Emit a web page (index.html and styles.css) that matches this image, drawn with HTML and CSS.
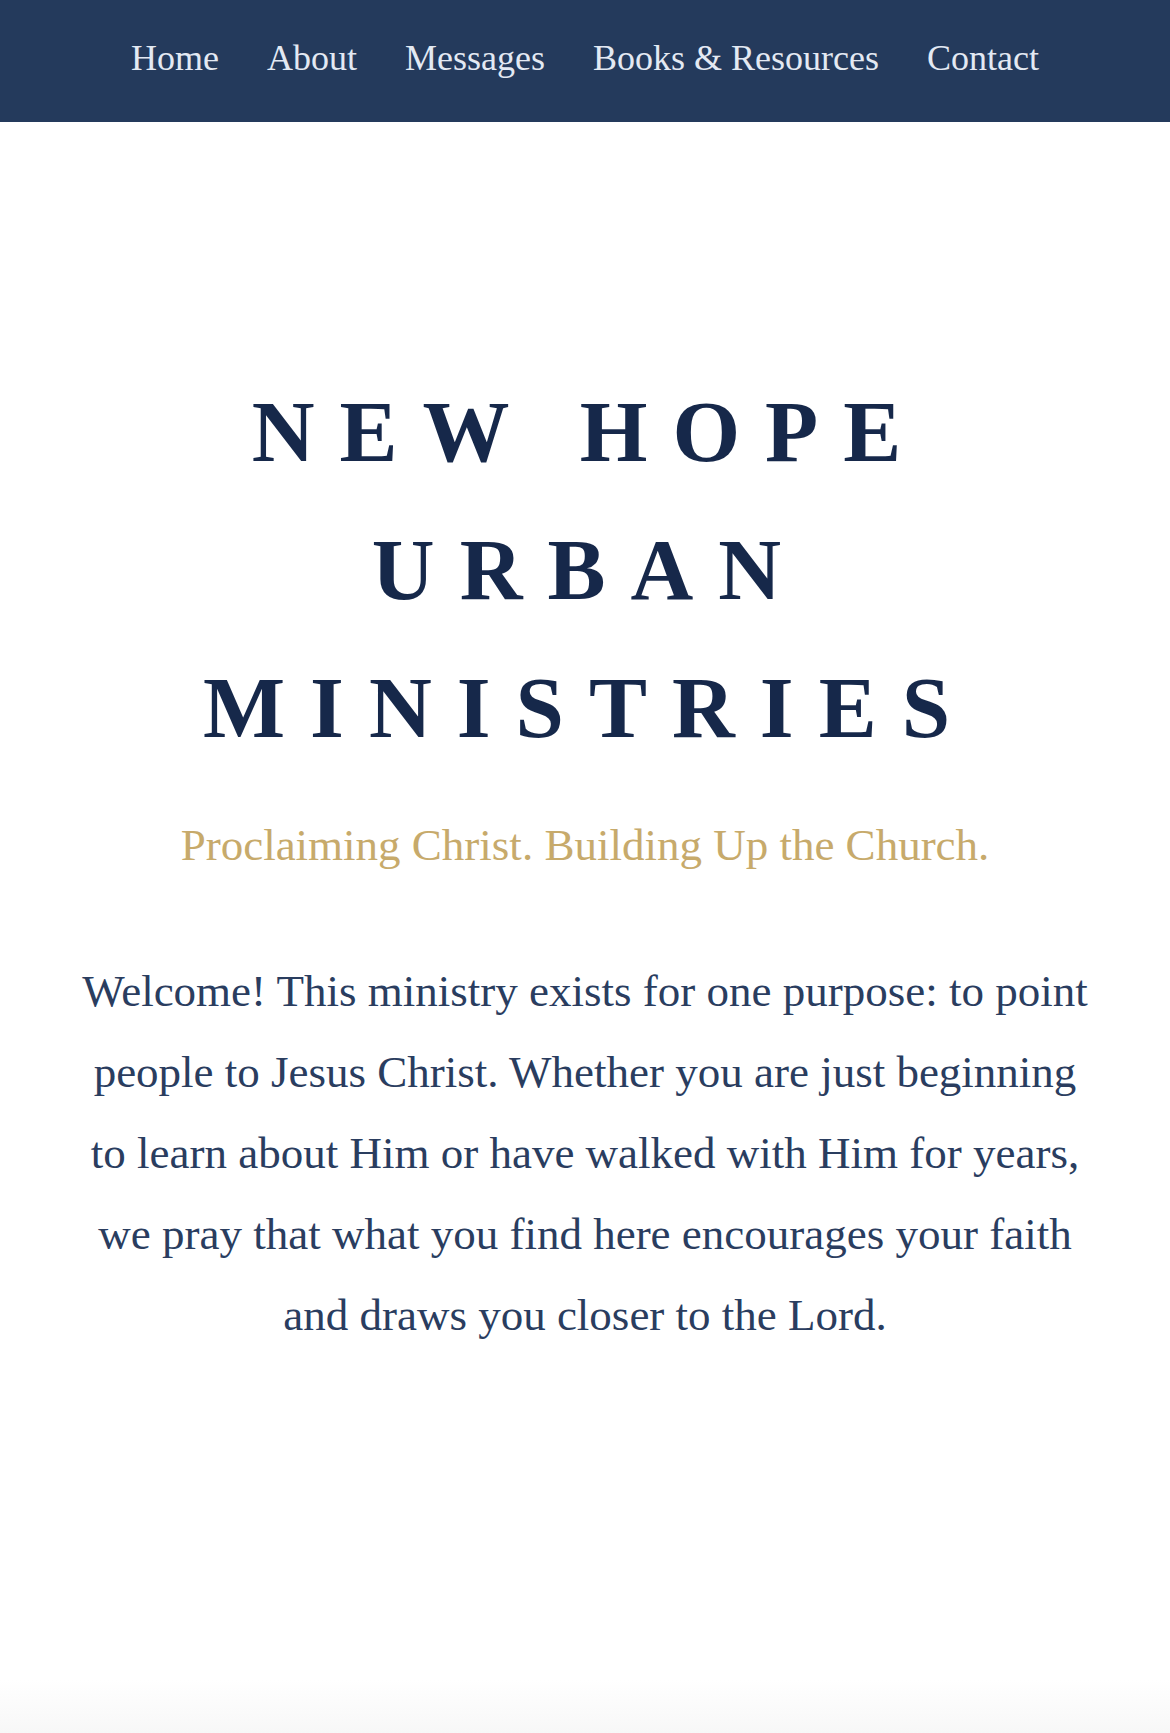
FILE: index.html
```html
<!DOCTYPE html>
<html lang="en">
<head>
<meta charset="utf-8">
<title>New Hope Urban Ministries</title>
<link rel="stylesheet" href="styles.css">
</head>
<body>
<header class="site-header">
  <nav class="main-nav">
    <a class="nav-link" href="#">Home</a>
    <a class="nav-link" href="#">About</a>
    <a class="nav-link" href="#">Messages</a>
    <a class="nav-link" href="#">Books &amp; Resources</a>
    <a class="nav-link" href="#">Contact</a>
  </nav>
</header>
<main class="hero">
  <h1 class="hero-title">NEW HOPE<br>URBAN<br>MINISTRIES</h1>
  <p class="hero-tagline">Proclaiming Christ. Building Up the Church.</p>
  <p class="hero-text">Welcome! This ministry exists for one purpose: to point people to Jesus Christ. Whether you are just beginning to learn about Him or have walked with Him for years, we pray that what you find here encourages your faith and draws you closer to the Lord.</p>
</main>
</body>
</html>
```
FILE: styles.css
```css
html {
  background: #ffffff;
}
body {
  margin: 0;
  min-height: 1733px;
  font-family: "Liberation Serif", "Times New Roman", serif;
  background: linear-gradient(to bottom, #ffffff 0, #ffffff 1680px, #f7f7f7 1733px);
}
.site-header {
  background: #243a5c;
  height: 122px;
  box-sizing: border-box;
  padding-bottom: 6px;
  display: flex;
  align-items: center;
  justify-content: center;
}
.main-nav {
  display: flex;
  gap: 48px;
}
.nav-link {
  color: #e3e9f3;
  text-decoration: none;
  font-size: 36px;
  line-height: 1;
}
.hero {
  padding: 241px 0 0;
  text-align: center;
}
.hero-title {
  margin: 0;
  color: #16284a;
  font-size: 87px;
  font-weight: bold;
  line-height: 138px;
  letter-spacing: 25px;
  padding-left: 8px;
}
.hero-tagline {
  margin: 37px 0 0;
  color: #c7aa6b;
  font-size: 45px;
  line-height: 63px;
}
.hero-text {
  margin: 74px auto 0;
  max-width: 1018px;
  color: #2a3d5f;
  font-size: 45px;
  line-height: 81px;
}
```
